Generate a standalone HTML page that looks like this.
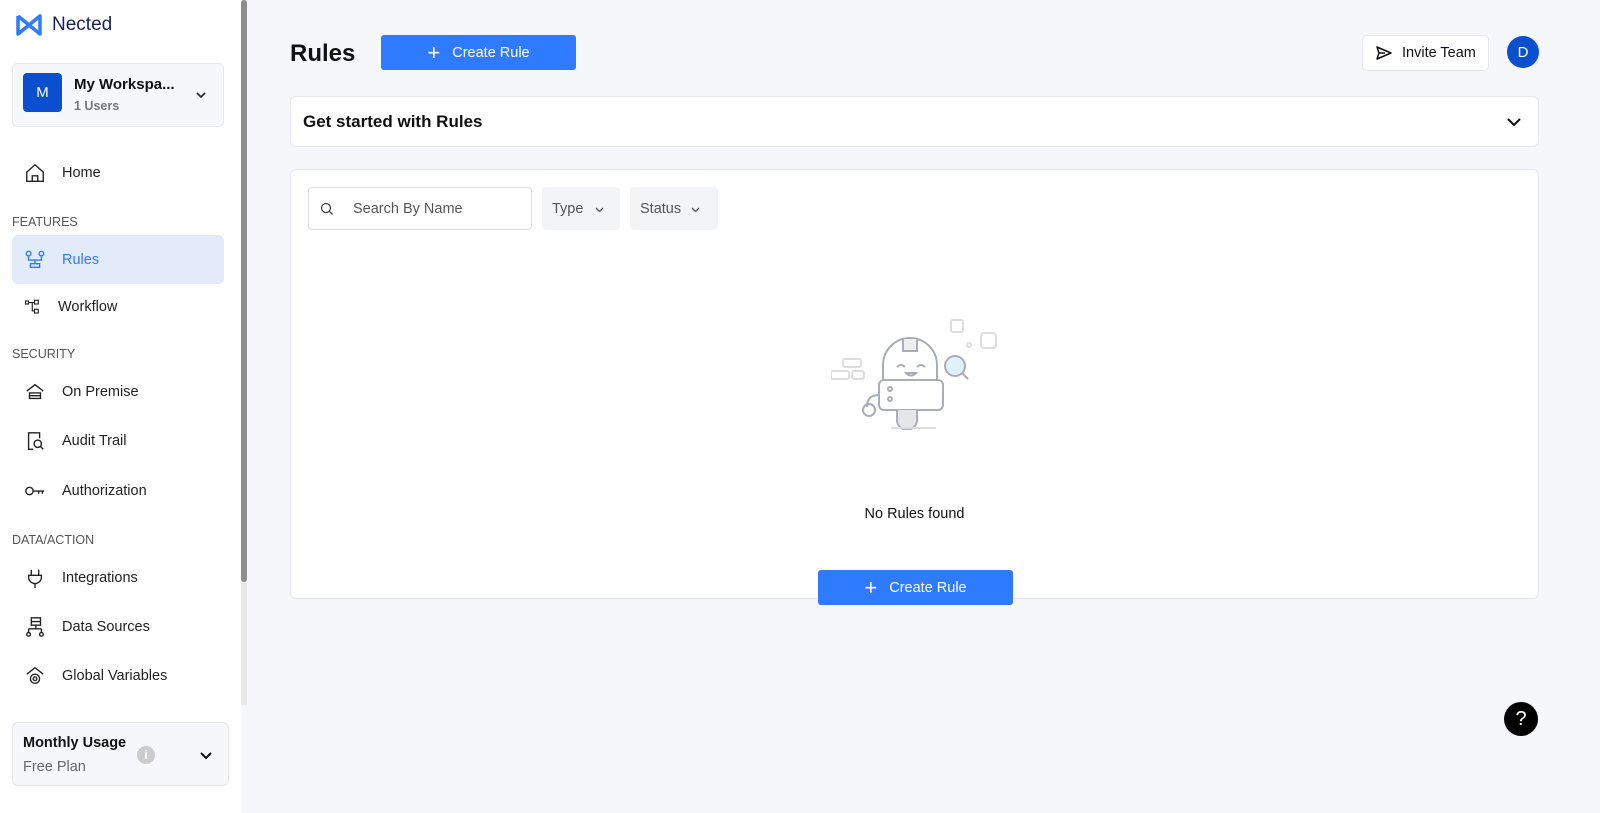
<!DOCTYPE html>
<html><head><meta charset="utf-8"><style>
*{box-sizing:border-box;margin:0;padding:0}
body{width:1600px;height:813px;overflow:hidden;font-family:"Liberation Sans",sans-serif;background:#f6f7fb;position:relative;color:#111}
.sb{position:absolute;left:0;top:0;width:241px;height:813px;background:#fff}
.scroll{position:absolute;left:241px;top:0;width:6px;height:705px;background:#e8e8e8}
.scroll i{position:absolute;left:0;top:0;width:6px;height:582px;background:#8d8d8d;border-radius:3px}
.nav{position:absolute;left:12px;width:212px;height:48px;display:flex;align-items:center;padding-left:12px;font-size:14.5px;color:#222}
.nav svg{width:22px;height:22px;margin-right:16px;fill:none;stroke:#222;stroke-width:1.5}
.sec{position:absolute;left:12px;font-size:12.5px;color:#555}
.btn{position:absolute;background:#2f7bff;color:#fff;border-radius:3px;display:flex;align-items:center;justify-content:center;font-size:14.5px}
.btn b{font-weight:300;font-size:22px;margin-right:12px}
</style></head><body>
<div class="sb">
 <svg style="position:absolute;left:15px;top:13px" width="28" height="24" viewBox="0 0 28 24"><path d="M3 3 L3 21 L25 3 L25 21 L3 3" fill="none" stroke="#2f7bff" stroke-width="3.5" stroke-linejoin="round"/></svg>
 <div style="position:absolute;left:52px;top:14px;font-size:19px;color:#1a1f5c">Nected</div>
 <div style="position:absolute;left:12px;top:63px;width:212px;height:64px;background:#f6f7fb;border:1px solid #e6e8ef;border-radius:5px">
  <div style="position:absolute;left:10px;top:9px;width:39px;height:39px;background:#0a4fd0;border-radius:4px;color:#fff;font-size:15px;display:flex;align-items:center;justify-content:center">M</div>
  <div style="position:absolute;left:61px;top:12px;font-size:15px;font-weight:bold">My Workspa...</div>
  <div style="position:absolute;left:61px;top:35px;font-size:12.5px;color:#777;font-weight:bold">1 Users</div>
  <svg style="position:absolute;left:183px;top:27px" width="10" height="8"><path d="M1 2l4 4 4-4" fill="none" stroke="#222" stroke-width="1.6"/></svg>
 </div>
 <div class="nav" style="top:149px"><svg viewBox="0 0 24 24"><path d="M3 11L12 3l9 8v10H3z M9 21v-6h6v6"/></svg>Home</div>
 <div class="sec" style="top:215px">FEATURES</div>
 <div class="nav" style="top:235px;height:49px;background:#e3ebfb;border-radius:6px;color:#2f7bff"><svg viewBox="0 0 24 24" style="stroke:#2f7bff"><circle cx="5" cy="5" r="2.5"/><circle cx="19" cy="5" r="2.5"/><path d="M5 8v4h14V8M12 12v4M7 16h10v4H7z"/></svg>Rules</div>
 <div class="nav" style="top:283px"><svg viewBox="0 0 24 24" style="width:18px;height:18px;margin-right:16px"><rect x="2" y="4" width="4" height="4"/><rect x="14" y="3" width="5" height="5"/><rect x="14" y="15" width="5" height="5"/><path d="M6 6h8M11 6v11h3"/></svg>Workflow</div>
 <div class="sec" style="top:347px">SECURITY</div>
 <div class="nav" style="top:368px"><svg viewBox="0 0 24 24"><path d="M3 11l9-7 9 7M6 13h12v6H6z M6 16h12"/></svg>On Premise</div>
 <div class="nav" style="top:417px"><svg viewBox="0 0 24 24"><path d="M17 9V3H5v18h5"/><circle cx="15" cy="15" r="4"/><path d="M18 18l3 3"/></svg>Audit Trail</div>
 <div class="nav" style="top:467px"><svg viewBox="0 0 24 24"><circle cx="6" cy="12" r="4"/><path d="M10 12h12M16 12v3M20 12v3"/></svg>Authorization</div>
 <div class="sec" style="top:533px">DATA/ACTION</div>
 <div class="nav" style="top:554px"><svg viewBox="0 0 24 24"><path d="M8 3v6M16 3v6M5 9h14v2a7 7 0 0 1-14 0zM12 18v5"/></svg>Integrations</div>
 <div class="nav" style="top:603px"><svg viewBox="0 0 24 24"><rect x="8" y="2" width="10" height="8"/><path d="M8 6h10M13 10v4M5 14h14M5 14v4M19 14v4"/><circle cx="5" cy="20" r="2"/><circle cx="19" cy="20" r="2"/></svg>Data Sources</div>
 <div class="nav" style="top:652px"><svg viewBox="0 0 24 24"><path d="M3 10l9-7 9 7"/><circle cx="12" cy="15" r="5"/><circle cx="12" cy="15" r="2"/></svg>Global Variables</div>
 <div style="position:absolute;left:12px;top:722px;width:217px;height:64px;background:#f6f7fb;border:1px solid #e3e5ec;border-radius:6px">
  <div style="position:absolute;left:10px;top:12px;font-size:14.5px;font-weight:bold">Monthly Usage</div>
  <div style="position:absolute;left:10px;top:36px;font-size:14.5px;color:#666">Free Plan</div>
  <div style="position:absolute;left:124px;top:23px;width:18px;height:18px;border-radius:50%;background:#ccc;color:#fff;font-size:12px;text-align:center;line-height:18px;font-weight:bold">i</div>
  <svg style="position:absolute;left:187px;top:28px" width="12" height="9"><path d="M1 2l5 5 5-5" fill="none" stroke="#111" stroke-width="2"/></svg>
 </div>
</div>
<div class="scroll"><i></i></div>

<div style="position:absolute;left:290px;top:40px;font-size:24px;font-weight:bold">Rules</div>
<div class="btn" style="left:381px;top:35px;width:195px;height:35px"><b>+</b>Create Rule</div>
<div style="position:absolute;left:1362px;top:35px;width:127px;height:36px;background:#fff;border:1px solid #e6e8ef;border-radius:5px;font-size:14.5px;display:flex;align-items:center;padding-left:13px;white-space:nowrap"><svg width="16" height="14" style="margin-right:10px;flex:none"><path d="M1 1l14 6-14 6 2-6z M3 7h6" fill="none" stroke="#111" stroke-width="1.5" stroke-linejoin="round"/></svg>Invite Team</div>
<div style="position:absolute;left:1507px;top:36px;width:32px;height:32px;border-radius:50%;background:#0a4fd0;color:#fff;font-size:15px;display:flex;align-items:center;justify-content:center">D</div>

<div style="position:absolute;left:290px;top:96px;width:1249px;height:51px;background:#fff;border:1px solid #e6e8ef;border-radius:6px">
 <div style="position:absolute;left:12px;top:15px;font-size:17px;font-weight:bold">Get started with Rules</div>
 <svg style="position:absolute;left:1216px;top:21px" width="14" height="9"><path d="M1 1l6 6 6-6" fill="none" stroke="#111" stroke-width="2"/></svg>
</div>

<div style="position:absolute;left:290px;top:169px;width:1249px;height:430px;background:#fff;border:1px solid #e6e8ef;border-radius:6px">
 <div style="position:absolute;left:17px;top:17px;width:224px;height:43px;border:1px solid #dcdfe6;border-radius:4px">
  <svg style="position:absolute;left:11px;top:14px" width="14" height="14"><circle cx="6" cy="6" r="4.5" fill="none" stroke="#444" stroke-width="1.3"/><path d="M9.5 9.5l3 3" stroke="#444" stroke-width="1.3"/></svg>
  <div style="position:absolute;left:44px;top:13px;font-size:14.5px;color:#555">Search By Name</div>
 </div>
 <div style="position:absolute;left:251px;top:17px;width:78px;height:43px;background:#f3f4f6;border-radius:4px;font-size:14.5px;color:#555;padding:14px 0 0 10px">Type<svg style="margin-left:12px" width="9" height="6"><path d="M1 1l3.5 3.5L8 1" fill="none" stroke="#555" stroke-width="1.3"/></svg></div>
 <div style="position:absolute;left:339px;top:17px;width:88px;height:43px;background:#f3f4f6;border-radius:4px;font-size:14.5px;color:#555;padding:14px 0 0 10px">Status<svg style="margin-left:10px" width="9" height="6"><path d="M1 1l3.5 3.5L8 1" fill="none" stroke="#555" stroke-width="1.3"/></svg></div>
 <svg style="position:absolute;left:540px;top:145px" width="170" height="115" viewBox="0 0 170 115" fill="none" stroke="#a9adb5" stroke-width="2">
  <rect x="12" y="44" width="18" height="8" rx="2" stroke="#ddd"/><rect x="0" y="56" width="18" height="8" rx="2" stroke="#ddd"/><rect x="21" y="56" width="12" height="8" rx="2" stroke="#ddd"/>
  <rect x="120" y="5" width="12" height="12" rx="2" stroke="#ddd"/><rect x="150" y="18" width="15" height="15" rx="3" stroke="#ddd"/><circle cx="138" cy="30" r="2" stroke="#ddd"/>
  <path d="M52 50a27 27 0 0 1 54 0v20H52z" fill="#fff"/><path d="M72 24v12h14V24" fill="#eee"/>
  <path d="M66 52q4-4 8 0M86 52q4-4 8 0M75 58q5 5 10 0z"/>
  <rect x="48" y="65" width="64" height="30" rx="5" fill="#fff"/><circle cx="59" cy="74" r="2"/><circle cx="59" cy="84" r="2"/>
  <path d="M66 95v10a10 10 0 0 0 20 0V95" fill="#e5e6e8"/>
  <path d="M48 80q-12 0-12 12"/><circle cx="38" cy="95" r="6"/>
  <circle cx="124" cy="51" r="10" fill="#dff1fb"/><path d="M131 58l6 6"/>
  <path d="M60 113h45" stroke="#ddd"/>
 </svg>
 <div style="position:absolute;left:0;width:100%;top:336px;text-align:center;font-size:14.5px">No Rules found</div>
 <div class="btn" style="left:527px;top:400px;width:195px;height:35px"><b>+</b>Create Rule</div>
</div>

<div style="position:absolute;left:1504px;top:702px;width:34px;height:34px;border-radius:50%;background:#000;color:#fff;font-size:20px;display:flex;align-items:center;justify-content:center">?</div>
</body></html>
